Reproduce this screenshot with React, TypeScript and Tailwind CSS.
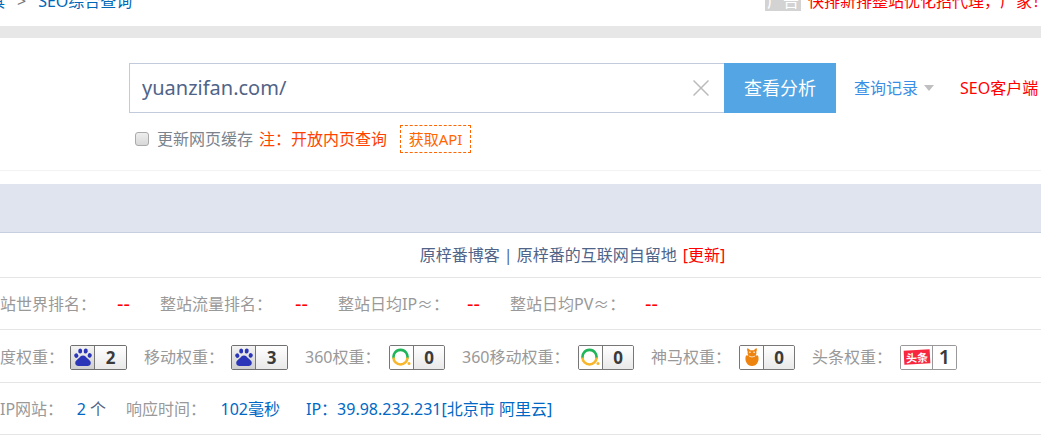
import React, { useState } from 'react';

type BadgeKind = 'baidu' | 'so360' | 'shenma' | 'toutiao';

// Whole-site traffic estimates
const TRAFFIC = [
  { label: '整站世界排名：', width: 'w-[176px]' },
  { label: '整站流量排名：', width: 'w-[178px]' },
  { label: '整站日均IP≈：', width: 'w-[172px]' },
  { label: '整站日均PV≈：', width: 'w-[178px]' },
];

// Search engine weights
const WEIGHTS: { label: string; value: number; kind: BadgeKind; width: string }[] = [
  { label: '百度权重：', value: 2, kind: 'baidu', width: 'w-[160px]' },
  { label: '移动权重：', value: 3, kind: 'baidu', width: 'w-[161px]' },
  { label: '360权重：', value: 0, kind: 'so360', width: 'w-[157px]' },
  { label: '360移动权重：', value: 0, kind: 'so360', width: 'w-[189px]' },
  { label: '神马权重：', value: 0, kind: 'shenma', width: 'w-[161px]' },
  { label: '头条权重：', value: 1, kind: 'toutiao', width: 'w-[162px]' },
];

const PawIcon = () => (
  <svg viewBox="0 0 18 18" className="h-[18px] w-[18px]" fill="#2a35b8">
    <ellipse cx="2.3" cy="7.6" rx="2" ry="2.3" transform="rotate(-18 2.3 7.6)" />
    <ellipse cx="6.2" cy="3" rx="2" ry="2.6" />
    <ellipse cx="11.7" cy="3" rx="2" ry="2.6" transform="rotate(8 11.7 3)" />
    <ellipse cx="15.7" cy="7.4" rx="2" ry="2.3" transform="rotate(14 15.7 7.4)" />
    <path d="M9 7.400c2 0 2.900 1.400 4 2.700 1.400 1.500 3.800 2.600 3.800 4.800 0 2-1.500 3-3.400 3H4.600c-1.900 0-3.400-1-3.400-3 0-2.200 2.400-3.300 3.800-4.800C6.100 8.800 7 7.400 9 7.400z" />
  </svg>
);

const RingIcon = () => (
  <svg viewBox="0 0 19 18" className="h-[18px] w-[19px]" fill="none">
    <path d="M1.700 10.500A7 7 0 1 1 15.300 10.500" stroke="#1fb65a" strokeWidth="2.600" />
    <path d="M1.500 9.500A7 7 0 0 0 15.500 9.500" stroke="#f8b62b" strokeWidth="2.600" />
    <circle cx="17" cy="15.600" r="1.500" fill="#f8b62b" />
  </svg>
);

const SquirrelIcon = () => (
  <svg viewBox="0 0 14 18" className="h-[18px] w-[14px]">
    <path d="M2.200.2C3.500.5 4.600 1.500 5.200 2.200h3.600C9.400 1.500 10.500.5 11.800.2c.3 1.600-.2 2.900-.5 3.700.4 1.500 0 2.600-.9 3.400 1 .2 1.900.6 2.400 0 1.200 2.400 1 5.300-.3 7.400C11.300 16.800 9.400 18 7 18s-4.300-1.200-5.500-3.300C.2 12.600 0 9.700 1.200 7.300c.5.6 1.400.2 2.400 0-.9-.8-1.300-1.900-.9-3.400C2.400 3.100 1.900 1.800 2.200.2z" fill="#ee8410" />
    <circle cx="4.900" cy="4.300" r=".8" fill="#fff" />
    <circle cx="9.100" cy="4.300" r=".8" fill="#fff" />
    <path d="M4 8.200Q7 9.800 10 8.200" stroke="#fff" strokeWidth=".7" fill="none" />
  </svg>
);

const WeightBadge = ({ kind, value }: { kind: BadgeKind; value: number }) => {
  const isToutiao = kind === 'toutiao';
  return (
    <span
      className={`flex h-[25px] overflow-hidden rounded-[2px] border text-[17px] font-bold text-[#3a3a3a] ${
        isToutiao ? 'w-[57px] border-[#999]' : kind === 'baidu' ? 'w-[57px] border-[#707070]' : 'w-[56px] border-[#777]'
      }`}
    >
      <span
        className={`flex shrink-0 items-center justify-center border-r ${
          isToutiao ? 'w-8 border-[#999]' : 'w-6 border-[#777]'
        } ${kind === 'baidu' ? 'bg-linear-to-b from-[#f4f4f4] to-[#cfcfcf]' : 'bg-white'}`}
      >
        {kind === 'baidu' && <PawIcon />}
        {kind === 'so360' && <RingIcon />}
        {kind === 'shenma' && <SquirrelIcon />}
        {isToutiao && (
          <span className="flex h-[14px] w-[26px] -rotate-3 items-center justify-center bg-[#f8263e] text-[11px] leading-none text-white">
            头条
          </span>
        )}
      </span>
      <span
        className={`flex flex-1 items-center justify-center leading-none ${
          isToutiao ? 'bg-white text-[20px] font-semibold' : 'bg-linear-to-b from-white to-[#e9e9e9]'
        }`}
      >
        {value}
      </span>
    </span>
  );
};

export default function App() {
  const [url, setUrl] = useState('yuanzifan.com/');
  const [refresh, setRefresh] = useState(false);

  return (
    <div className="overflow-hidden bg-white font-['Noto_Sans','Noto_Sans_CJK_SC',sans-serif] text-base leading-6 whitespace-nowrap text-[#999]">
      {/* Breadcrumb and ad */}
      <header className="-mt-[11px] flex justify-between pb-[13px]">
        <nav className="-ml-[59px] flex gap-3 text-[#0068b7]">
          <a href="#">站长工具</a>
          <span className="text-[#777]">&gt;</span>
          <a href="#">SEO综合查询</a>
        </nav>
        <div className="-mr-[7px] flex gap-[7px]">
          <span className="h-[22px] w-9 bg-[#d3d3d3] text-center leading-6 text-white">广告</span>
          <a href="#" className="text-[#f00]">快排新排整站优化招代理，厂家！</a>
        </div>
      </header>
      <div className="h-3 bg-[#e7e7e7]" />

      {/* Search */}
      <section className="border-b border-[#f3f3f3] pt-[25px] pb-[17px] pl-[129px]">
        <form className="flex items-center" onSubmit={(e) => e.preventDefault()}>
          <div className="flex h-[50px] flex-1 items-center border border-r-0 border-[#c2cbdc] pr-[15px] pl-3">
            <input
              type="text"
              aria-label="网址"
              value={url}
              onChange={(e) => setUrl(e.target.value)}
              className="min-w-0 flex-1 text-xl text-[#4f6488] outline-none"
            />
            <button type="button" aria-label="清除" onClick={() => setUrl('')}>
              <svg viewBox="0 0 16 16" className="h-4 w-4" stroke="#bbb" strokeWidth="1.500">
                <path d="M.5.5l15 15M15.500.5l-15 15" />
              </svg>
            </button>
          </div>
          <button type="submit" className="h-[50px] w-28 bg-[#54a5e3] text-lg text-white">
            查看分析
          </button>
          <button type="button" className="ml-[18px] flex items-center gap-1.5 text-[#3b8ee5]">
            查询记录
            <svg viewBox="0 0 10 6" className="h-1.5 w-2.5" fill="#bfbfbf">
              <path d="M0 0h10L5 6z" />
            </svg>
          </button>
          <a href="#" className="ml-[26px] w-[81px] text-[#f00]">SEO客户端</a>
        </form>

        <div className="mt-3 flex items-center pl-1.5">
          <label className="flex items-center gap-2 text-[#7b838c]">
            <input
              type="checkbox"
              checked={refresh}
              onChange={(e) => setRefresh(e.target.checked)}
              className="h-3.5 w-3.5 appearance-none rounded-[3px] border border-[#aaa] bg-linear-to-b from-[#eee] to-[#d8d8d8] checked:bg-[#54a5e3]"
            />
            更新网页缓存
          </label>
          <span className="ml-1.5 text-[#ff4200]">注：开放内页查询</span>
          <a
            href="#"
            className="ml-[13px] flex h-7 w-[71px] items-center justify-center border border-dashed border-[#ff6600] text-[15px] text-[#ff6600]"
          >
            获取API
          </a>
        </div>
      </section>

      {/* Result panel */}
      <section className="mt-[13px]">
        <div className="h-[49px] border-b border-[#c6cfe0] bg-[#dfe4ee]" />
        <div className="flex h-[45px] items-center justify-center gap-1.5 border-b border-[#e5e5e5] pl-[104px] text-[#4f6488]">
          <h1>原梓番博客 | 原梓番的互联网自留地</h1>
          <a href="#" className="text-[#f00]">[更新]</a>
        </div>

        <div className="-ml-4 flex h-[52px] items-center border-b border-[#e5e5e5]">
          {TRAFFIC.map((item) => (
            <div key={item.label} className={`flex shrink-0 justify-between pr-7.5 ${item.width}`}>
              <span>{item.label}</span>
              <span className="text-xl leading-6 text-[#f00]">--</span>
            </div>
          ))}
        </div>

        <div className="-ml-4 flex h-[53px] items-center border-b border-[#e5e5e5] pt-0.5">
          {WEIGHTS.map((item) => (
            <div key={item.label} className={`flex shrink-0 items-center justify-between pr-[17px] ${item.width}`}>
              <span>{item.label}</span>
              <WeightBadge kind={item.kind} value={item.value} />
            </div>
          ))}
        </div>

        <div className="-ml-4 flex h-[52px] items-center border-b border-[#e5e5e5]">
          <div className="flex w-[142px] shrink-0 justify-between pr-5">
            <span>同IP网站：</span>
            <a href="#" className="text-[#0068c4]">2 <span className="text-[#4f6488]">个</span></a>
          </div>
          <div className="flex w-[180px] shrink-0 justify-between pr-[26px]">
            <span>响应时间：</span>
            <span className="text-[#0068c4]">102毫秒</span>
          </div>
          <a href="#" className="text-[#0068c4]">IP：39.98.232.231[北京市 阿里云]</a>
        </div>
      </section>
    </div>
  );
}
